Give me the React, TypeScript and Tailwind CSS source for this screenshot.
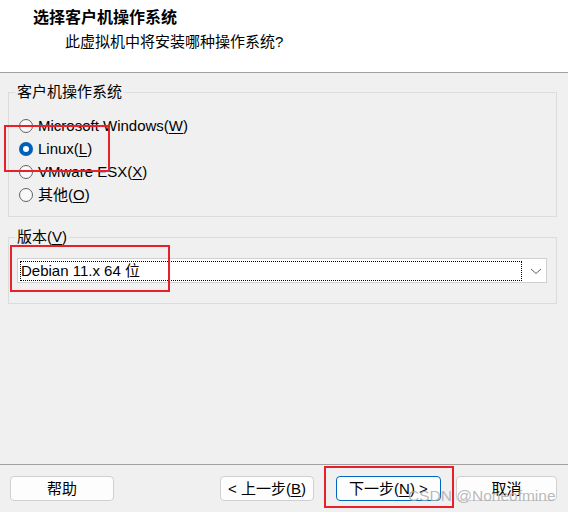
import type { ReactNode } from 'react'

const font = "font-['Segoe_UI','Liberation_Sans','Noto_Sans_CJK_SC',sans-serif]"

const Key = ({ children }: { children: ReactNode }) => <span className="underline underline-offset-2">{children}</span>

const Radio = ({ checked, children }: { checked?: boolean; children: ReactNode }) => (
  <div className="flex h-[23px] items-center gap-[5px]">
    {checked ? (
      <span className="flex h-[14px] w-[14px] items-center justify-center rounded-full bg-[#005fb8]">
        <span className="h-[6px] w-[6px] rounded-full bg-white" />
      </span>
    ) : (
      <span className="h-[14px] w-[14px] rounded-full border border-[#616161] bg-[#f9f9f9]" />
    )}
    <span>{children}</span>
  </div>
)

const Button = ({ width, primary, children }: { width: string; primary?: boolean; children: ReactNode }) => (
  <button
    className={`flex h-[25px] items-center justify-center rounded-[4px] border bg-[#fdfdfd] ${width} ${
      primary ? 'border-[#0067c0]' : 'border-[#d0d0d0]'
    }`}
  >
    {children}
  </button>
)

export default function App() {
  return (
    <div className={`relative flex h-[512px] w-[568px] flex-col overflow-hidden bg-[#f0f0f0] text-[15px] leading-[20px] text-black ${font}`}>
      <header className="h-[73px] border-b border-[#a0a0a0] bg-white">
        <h1 className="pl-[33px] pt-[8px] text-[16px] font-bold">选择客户机操作系统</h1>
        <p className="pl-[65px] pt-[4px]">此虚拟机中将安装哪种操作系统?</p>
      </header>

      <main className="flex-1 px-[8px] pr-[11px]">
        <fieldset className="mt-[9px] border border-[#dcdcdc] px-[10px] pb-[10px] pt-[12px]">
          <legend className="-ml-[4px] px-[2px]">客户机操作系统</legend>
          <Radio>
            Microsoft Windows(<Key>W</Key>)
          </Radio>
          <Radio checked>
            Linux(<Key>L</Key>)
          </Radio>
          <Radio>
            VMware ESX(<Key>X</Key>)
          </Radio>
          <Radio>
            其他(<Key>O</Key>)
          </Radio>
        </fieldset>

        <fieldset className="mt-[10px] border border-[#dcdcdc] pb-[20px] pl-[8px] pr-[9px] pt-[11px]">
          <legend className="-ml-[2px] px-[2px]">
            版本(<Key>V</Key>)
          </legend>
          <div className="flex h-[25px] items-center border border-[#d0d0d0] bg-white pl-[2px]">
            <div className="flex h-[20px] flex-1 items-center border border-dotted border-black">
              Debian 11.x 64 位
            </div>
            <svg width="24" height="20" viewBox="0 0 24 20" className="shrink-0">
              <path d="M9 8 L14 12.5 L19 8" fill="none" stroke="#606060" strokeWidth="1" />
            </svg>
          </div>
        </fieldset>
      </main>

      <footer className="h-[48px] border-t border-[#a0a0a0]">
        <div className="flex pl-[10px] pt-[11px]">
          <Button width="w-[104px]">帮助</Button>
          <div className="ml-[106px] flex gap-[22px]">
            <Button width="w-[94px]">
              &lt; 上一步(<Key>B</Key>)
            </Button>
            <Button width="w-[105px]" primary>
              下一步(<Key>N</Key>) &gt;
            </Button>
          </div>
          <div className="ml-[15px]">
            <Button width="w-[101px]">取消</Button>
          </div>
        </div>
      </footer>

      <div className="pointer-events-none absolute left-[4px] top-[125px] h-[47px] w-[106px] border-2 border-[#e8202a]" />
      <div className="pointer-events-none absolute left-[10px] top-[245px] h-[47px] w-[160px] border-2 border-[#e8202a]" />
      <div className="pointer-events-none absolute left-[324px] top-[466px] h-[42px] w-[130px] border-2 border-[#e8202a]" />

      <div className="pointer-events-none absolute left-[408px] top-[486px] whitespace-nowrap font-['Liberation_Sans',sans-serif] text-[15.5px] leading-[20px] text-[#a8a8a8]/80">
        CSDN @Noneofmine
      </div>
    </div>
  )
}
